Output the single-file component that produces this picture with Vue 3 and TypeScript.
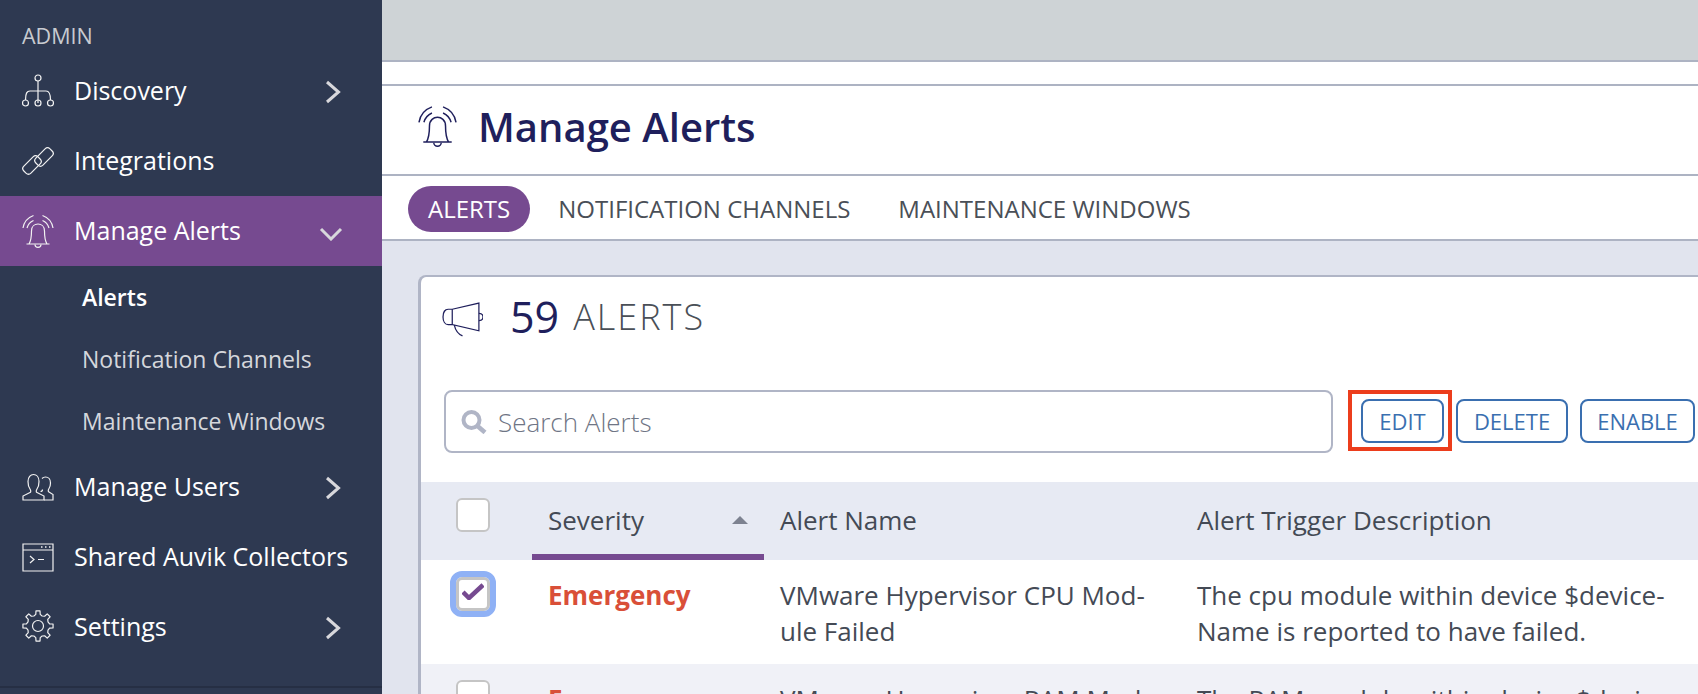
<script setup lang="ts">
type Item = { label: string; icon: string; arrow?: string; active?: boolean; subs?: { label: string; current?: boolean }[] }
const items: Item[] = [
  { label: 'Discovery', icon: 'tree', arrow: 'right' },
  { label: 'Integrations', icon: 'link' },
  {
    label: 'Manage Alerts', icon: 'bell', arrow: 'down', active: true,
    subs: [{ label: 'Alerts', current: true }, { label: 'Notification Channels' }, { label: 'Maintenance Windows' }]
  },
  { label: 'Manage Users', icon: 'users', arrow: 'right' },
  { label: 'Shared Auvik Collectors', icon: 'term' },
  { label: 'Settings', icon: 'gear', arrow: 'right' }
]
const rows = [
  { sev: 'Emergency', name: ['VMware Hypervisor CPU Mod-', 'ule Failed'], desc: ['The cpu module within device $device-', 'Name is reported to have failed.'], checked: true },
  { sev: 'Emergency', name: ['VMware Hypervisor RAM Mod-', 'ule Failed'], desc: ['The RAM module within device $devi-', 'ceName is reported to have failed.'], checked: false }
]
const gearPath = (() => {
  const cx = 16, cy = 16, teeth = 8
  let d = ''
  for (let i = 0; i < teeth; i++) {
    const a = (i / teeth) * Math.PI * 2 - Math.PI / 2
    const step = Math.PI * 2 / teeth
    const pts: [number, number][] = [
      [10.8, a - step * 0.5], [11.8, a - step * 0.24], [15.2, a - step * 0.17], [15.2, a + step * 0.17], [11.8, a + step * 0.24]
    ]
    for (const [r, t] of pts) {
      d += (d ? 'L' : 'M') + (cx + r * Math.cos(t)).toFixed(2) + ' ' + (cy + r * Math.sin(t)).toFixed(2)
    }
  }
  return d + 'Z'
})()
</script>

<template>
  <div class="page">
    <aside class="side">
      <div class="admin">ADMIN</div>
      <template v-for="it in items" :key="it.label">
        <div class="item" :class="{ active: it.active }">
          <svg class="ico" viewBox="0 0 32 34" fill="none" stroke="currentColor" stroke-width="1.2">
            <g v-if="it.icon === 'tree'">
              <circle cx="16" cy="4" r="3" />
              <path d="M16 7V29M16 17H8C5 17 3.500 19 3.500 26M16 17H24C27 17 28.500 19 28.500 26" />
              <circle cx="3.500" cy="29" r="3" />
              <circle cx="16" cy="29" r="3" />
              <circle cx="28.500" cy="29" r="3" />
            </g>
            <g v-else-if="it.icon === 'link'">
              <rect x="12" y="8" width="20" height="10" rx="3.500" transform="rotate(-45 22 13)" />
              <rect x="0" y="16" width="20" height="10" rx="3.500" transform="rotate(-45 10 21)" />
            </g>
            <g v-else-if="it.icon === 'bell'">
              <path d="M4.500 30H27.500M7 30C9.500 26 9.500 20 9.500 17C9.500 12 13 10 16 10C19 10 22.500 12 22.500 17C22.500 20 22.500 26 25 30" />
              <path d="M13 30.500A3 2.800 0 0 0 19 30.500" />
              <path d="M1 14C2 8 6 3.500 11.500 1.500M5 14C6 10.500 8 8 11.500 6.500M31 14C30 8 26 3.500 20.500 1.500M27 14C26 10.500 24 8 20.500 6.500" />
            </g>
            <g v-else-if="it.icon === 'users'">
              <path d="M1 30V26L8 22.500C9 22 9 20.500 8 19C6.500 17 6 14 6 11.500C6 7 8.500 4.500 11.500 4.500C14.500 4.500 17 7 17 11.500C17 14 16.500 17 15 19C14 20.500 14 22 15 22.500L22 26V30Z" />
              <path d="M20 8.500C21 7.500 22 7 23.500 7C26.500 7 28.500 9.500 28.500 13C28.500 15 28 17 27 18.500C26 20 26 21.500 27 22L31 24.500V30H22M18.500 21.500C20 21.500 20.500 20.500 20.500 19.500" />
            </g>
            <g v-else-if="it.icon === 'term'">
              <path d="M1 4H31V31H1ZM1 10H31" />
              <path d="M8 16L12 19.500L8 23M16 19.500H22" />
              <path d="M19 7H20.500M23 7H24.500M27 7H28.500" stroke-width="1.500" />
            </g>
            <g v-else>
              <path :d="gearPath" stroke-linejoin="round" />
              <circle cx="16" cy="16" r="5.500" />
            </g>
          </svg>
          <span class="label">{{ it.label }}</span>
          <svg v-if="it.arrow === 'right'" class="arr-r" viewBox="0 0 16 24" fill="none" stroke="currentColor" stroke-width="3"><path d="M2 2L13.500 12L2 22" /></svg>
          <svg v-if="it.arrow === 'down'" class="arr-d" viewBox="0 0 24 14" fill="none" stroke="currentColor" stroke-width="3"><path d="M2 2L12 12L22 2" /></svg>
        </div>
        <div v-for="s in it.subs" :key="s.label" class="sub" :class="{ current: s.current }">{{ s.label }}</div>
      </template>
      <div class="side-rule"></div>
    </aside>

    <main class="main">
      <div class="topbar"></div>
      <div class="strip"></div>
      <header class="head">
        <svg class="head-ico" viewBox="0 0 32 34" fill="none" stroke="#1f1f5c" stroke-width="1.200">
          <path d="M4.500 30H27.500M7 30C9.500 26 9.500 20 9.500 17C9.500 12 13 10 16 10C19 10 22.500 12 22.500 17C22.500 20 22.500 26 25 30" />
          <path d="M13 30.500A3 2.800 0 0 0 19 30.500" />
          <path d="M1 14C2 8 6 3.500 11.500 1.500M5 14C6 10.500 8 8 11.500 6.500M31 14C30 8 26 3.500 20.500 1.500M27 14C26 10.500 24 8 20.500 6.500" />
        </svg>
        <h1>Manage Alerts</h1>
      </header>
      <nav class="tabs">
        <span class="tab on">ALERTS</span>
        <span class="tab">NOTIFICATION CHANNELS</span>
        <span class="tab">MAINTENANCE WINDOWS</span>
      </nav>
      <section class="content">
        <div class="card">
          <div class="count">
            <svg class="mega" viewBox="0 0 40 34" fill="none" stroke="#1f1f5c" stroke-width="1.200">
              <path d="M10 7H6C3 7 1 10 1 14.500C1 19 3 22 6 22H10ZM10 7L36 1V28L10 22Z" />
              <path d="M36 11C39 11 40 13 40 14.500C40 16 39 18 36 18" />
              <path d="M12 22.500C13 27 15 31 20 33" />
            </svg>
            <span class="num">59</span>
            <span class="word">ALERTS</span>
          </div>
          <div class="tools">
            <div class="search">
              <svg class="s-ico" viewBox="0 0 26 24" fill="none" stroke="#b0b5c6"><circle cx="10.500" cy="10" r="8" stroke-width="4" /><path d="M16.500 16L24 22.500" stroke-width="4.500" /></svg>
              <span class="ph">Search Alerts</span>
            </div>
            <div class="btn-mark"><button class="btn edit">EDIT</button><span class="red"></span></div>
            <button class="btn del">DELETE</button>
            <button class="btn ena">ENABLE</button>
          </div>
          <div class="thead">
            <div class="c-check"><span class="box"></span></div>
            <div class="c-sev th-sev"><span>Severity</span><i class="caret"></i></div>
            <div class="c-name">Alert Name</div>
            <div class="c-desc">Alert Trigger Description</div>
          </div>
          <div v-for="(r, i) in rows" :key="i" class="row" :class="{ alt: i % 2 === 1 }">
            <div class="c-check">
              <span class="box" :class="{ focus: r.checked }">
                <svg v-if="r.checked" viewBox="0 0 22 17" class="tick" fill="none" stroke="#764a90" stroke-width="4.500"><path d="M1 9L7 15L21 2" /></svg>
              </span>
            </div>
            <div class="c-sev sev">{{ r.sev }}</div>
            <div class="c-name"><div v-for="l in r.name" :key="l">{{ l }}</div></div>
            <div class="c-desc"><div v-for="l in r.desc" :key="l">{{ l }}</div></div>
          </div>
        </div>
      </section>
    </main>
  </div>
</template>

<style>
html, body { margin: 0; overflow: hidden; }
</style>

<style scoped>
.page { display: flex; width: 1698px; height: 694px; overflow: hidden; font-family: "Open Sans", sans-serif; }
.side { width: 382px; flex: none; background: #2e3951; color: #fff; display: flex; flex-direction: column; position: relative; }
.admin { height: 56px; padding: 24px 0 0 22px; box-sizing: border-box; font-size: 21.500px; line-height: 24px; color: #c8cbd0; }
.item { height: 70px; display: flex; align-items: center; flex: none; position: relative; padding-left: 22px; }
.item.active { background: #764a90; }
.ico { width: 32px; height: 34px; flex: none; color: #f2f2f2; }
.label { margin: -2px 0 0 20px; font-size: 25px; font-weight: 400; white-space: nowrap; }
.arr-r { position: absolute; left: 325px; top: 24px; width: 16px; height: 24px; color: #d8d8dc; }
.arr-d { position: absolute; left: 319px; top: 31px; width: 24px; height: 14px; color: #d8d8dc; }
.sub { height: 62px; flex: none; padding-left: 82px; font-size: 23px; line-height: 62px; color: #d5d7dc; }
.sub.current { color: #fff; font-weight: 600; }
.side-rule { position: absolute; left: 0; right: 0; top: 686px; height: 2px; background: #262f44; }

.main { flex: 1; min-width: 0; display: flex; flex-direction: column; background: #e1e4ee; }
.topbar { height: 60px; flex: none; background: #ced3d6; border-bottom: 2px solid #adb3c3; }
.strip { height: 22px; flex: none; background: #fff; border-bottom: 2px solid #adb3c3; }
.head { height: 82px; padding-bottom: 6px; flex: none; background: #fff; border-bottom: 2px solid #adb3c3; display: flex; align-items: center; padding-left: 35px; }
.head-ico { width: 41px; height: 42px; flex: none; margin-top: -2px; }
h1 { margin: 0 0 0 20px; font-size: 40px; font-weight: 600; color: #1f1f5c; line-height: 1; }
.tabs { height: 61px; padding-top: 2px; flex: none; background: #fff; border-bottom: 2px solid #adb3c3; display: flex; align-items: center; padding-left: 26px; font-size: 24px; color: #4a4f57; }
.tab { padding: 0 20px; line-height: 46px; white-space: nowrap; margin-right: 8px; }
.tab.on { background: #764a90; color: #fff; border-radius: 23px; margin-right: 8px; }
.content { flex: 1; min-height: 0; padding: 34px 0 0 36px; overflow: hidden; }
.card { background: #fff; border-top: 2px solid #b0b5c6; border-left: 3px solid #b0b5c6; border-top-left-radius: 8px; height: 500px; box-sizing: border-box; }
.count { height: 113px; display: flex; align-items: flex-start; padding: 23px 0 0 21px; box-sizing: border-box; }
.mega { width: 41px; height: 35px; margin-top: 2px; flex: none; }
.num { margin: -7px 0 0 27px; font-size: 43px; line-height: 48px; color: #1f1f5c; }
.word { margin: -7px 0 0 14px; font-size: 36px; font-weight: 300; line-height: 48px; letter-spacing: 2px; color: #4a4f57; }
.tools { height: 92px; display: flex; align-items: flex-start; padding-left: 23px; }
.search { width: 889px; height: 63px; flex: none; box-sizing: border-box; border: 2px solid #b0b5c6; border-radius: 8px; display: flex; align-items: center; padding-left: 15px; margin-right: 28px; }
.s-ico { width: 26px; height: 24px; flex: none; }
.ph { margin-left: 11px; font-size: 26px; font-weight: 300; color: #6f7585; }
.btn-mark { position: relative; margin-right: 12px; margin-top: 9px; }
.btn { height: 44px; box-sizing: border-box; border: 2px solid #3a6fb0; border-radius: 8px; background: #fff; color: #3a6fb0; font-family: inherit; font-size: 22px; padding: 0; display: block; }
.edit { width: 83px; }
.del { width: 112px; margin-top: 9px; margin-right: 12px; flex: none; }
.ena { width: 115px; margin-top: 9px; flex: none; }
.red { position: absolute; left: -13px; top: -9px; width: 104px; height: 61px; box-sizing: border-box; border: 4px solid #ec3d1c; }
.thead, .row { display: grid; grid-template-columns: 111px 232px 417px 1fr; }
.thead { height: 78px; background: #e7eaf3; color: #444a55; font-size: 26px; line-height: 76px; margin-top: 0; }
.thead .c-check { padding-top: 16px; line-height: 0; }
.th-sev { border-bottom: 6px solid #764a90; box-sizing: border-box; height: 78px; display: flex; justify-content: space-between; align-items: center; padding: 4px 16px 0; line-height: 1; }
.caret { width: 0; height: 0; border-left: 8px solid transparent; border-right: 8px solid transparent; border-bottom: 8px solid #7d8290; margin-top: 0; }
.c-name, .c-desc { padding-left: 16px; white-space: nowrap; }
.row { height: 104px; font-size: 26px; line-height: 36px; color: #444a55; overflow: hidden; background: #fff; }
.row.alt { background: #f0f1f7; }
.row > .c-name, .row > .c-desc, .row > .sev { padding-top: 17px; }
.row .c-check { padding-top: 17px; }
.row.alt .c-check { padding-top: 16px; }
.sev { padding-left: 16px; color: #d94f38; font-weight: 700; }
.c-check { padding-left: 35px; box-sizing: border-box; }
.box { display: block; width: 34px; height: 34px; box-sizing: border-box; border: 2px solid #c5c5c5; border-radius: 6px; background: #fff; position: relative; }
.box.focus { outline: 6px solid #8fb1f5; border-width: 3px; }
.tick { position: absolute; left: 3px; top: 3px; width: 22px; height: 17px; }
</style>
